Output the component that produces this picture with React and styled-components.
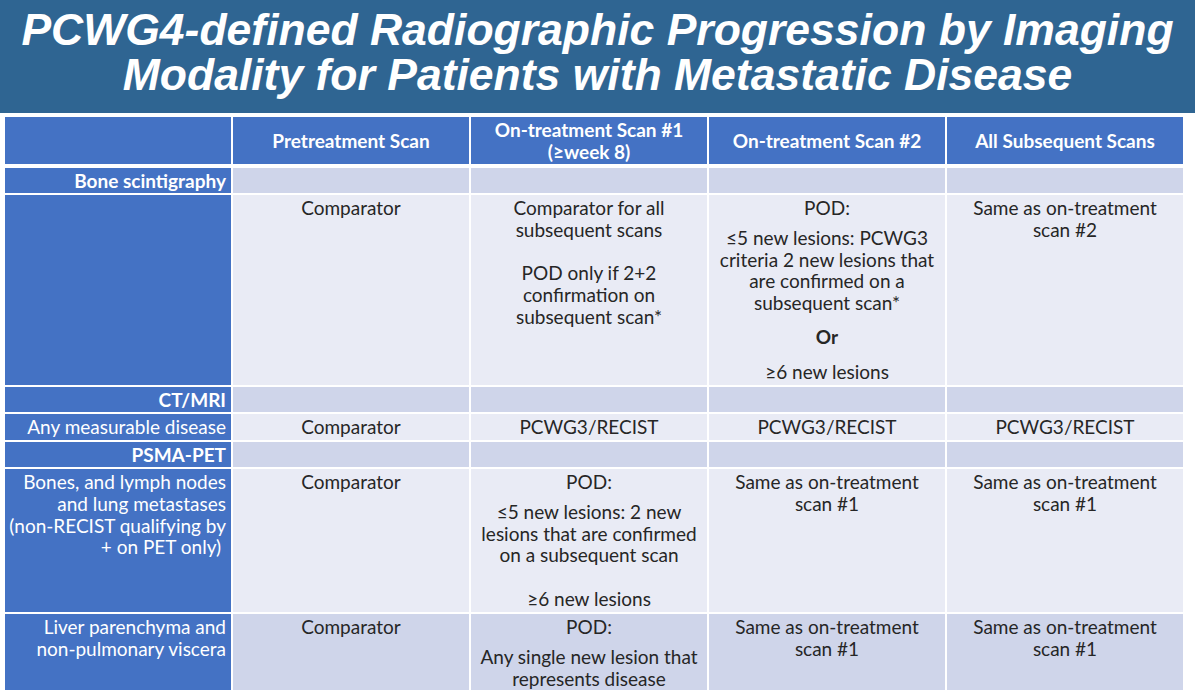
import React from "react";
import styled, { createGlobalStyle } from "styled-components";

const GlobalStyle = createGlobalStyle`
  html, body { margin: 0; padding: 0; background: #ffffff; }
  body { width: 1200px; height: 695px; overflow: hidden; }
`;

const Page = styled.div`
  width: 1200px;
  height: 695px;
  background: #ffffff;
  display: flex;
  flex-direction: column;
`;

const Banner = styled.header`
  width: 1195px;
  height: 113px;
  box-sizing: border-box;
  padding-top: 7px;
  background: #2f6592;
  display: flex;
  flex-direction: column;
  align-items: center;
`;

const Title = styled.h1`
  margin: 0;
  font-family: "Liberation Sans", Arial, sans-serif;
  font-weight: bold;
  font-style: italic;
  font-size: 44.5px;
  line-height: 45px;
  color: #ffffff;
  text-align: center;
  white-space: nowrap;
`;

const Table = styled.div`
  margin: 4px 0 0 5px;
  width: 1178px;
  display: flex;
  flex-direction: column;
  gap: 4px;
  font-family: "Lato", "Open Sans", sans-serif;
`;

const cols = "226px 236px 236px 236px 236px";

const HeaderGrid = styled.div`
  display: grid;
  grid-template-columns: ${cols};
  grid-template-rows: 47px;
  column-gap: 2px;
`;

const BodyGrid = styled.div`
  display: grid;
  grid-template-columns: ${cols};
  grid-template-rows: 25px 190px 25px 26px 25px 143px 76px;
  gap: 2px;
`;

const HeadCell = styled.div`
  background: #4472c4;
  color: #ffffff;
  font-weight: bold;
  font-size: 19px;
  line-height: 22px;
  display: flex;
  align-items: center;
  justify-content: center;
  text-align: center;
  white-space: nowrap;
`;

const RowHead = styled.div`
  background: #4472c4;
  color: #ffffff;
  font-weight: ${(p) => (p.$bold ? "bold" : "normal")};
  font-size: 19px;
  line-height: 21.8px;
  text-align: right;
  white-space: nowrap;
  box-sizing: border-box;
  padding: ${(p) => (p.$center ? "0 5px 0 0" : "2px 5px 0 0")};
  display: flex;
  flex-direction: column;
  justify-content: ${(p) => (p.$center ? "center" : "flex-start")};
`;

const DataCell = styled.div`
  background: ${(p) => (p.$tone === "mid" ? "#cfd5ea" : "#e9ebf5")};
  color: #262626;
  font-size: 19px;
  line-height: 21.8px;
  text-align: center;
  white-space: nowrap;
  box-sizing: border-box;
  padding: ${(p) => (p.$center ? "0" : "2px 0 0 0")};
  display: flex;
  flex-direction: column;
  justify-content: ${(p) => (p.$center ? "center" : "flex-start")};
`;

const Para = styled.p`
  margin: ${(p) => p.$gap || 0}px 0 0 0;
  font-weight: ${(p) => (p.$bold ? "bold" : "normal")};
  min-height: 21.8px;
`;

const Lines = ({ lines }) =>
  lines.map((l, i) => (
    <React.Fragment key={i}>
      {i > 0 && <br />}
      {l}
    </React.Fragment>
  ));

const Cell = ({ paras = [], tone, center }) => (
  <DataCell $tone={tone} $center={center}>
    {paras.map((p, i) => (
      <Para key={i} $gap={p.gap} $bold={p.bold}>
        <Lines lines={p.lines} />
      </Para>
    ))}
  </DataCell>
);

const headers = [
  "",
  ["Pretreatment Scan"],
  ["On-treatment Scan #1", "(≥week 8)"],
  ["On-treatment Scan #2"],
  ["All Subsequent Scans"],
];

const P = (lines, gap = 0, bold = false) => ({ lines, gap, bold });

const sameAs1 = [P(["Same as on-treatment", "scan #1"])];

const rows = [
  { kind: "section", label: "Bone scintigraphy" },
  {
    label: [],
    tone: "light",
    cells: [
      [P(["Comparator"])],
      [P(["Comparator for all", "subsequent scans", "", "POD only if 2+2", "confirmation on", "subsequent scan*"])],
      [
        P(["POD:"]),
        P(["≤5 new lesions: PCWG3", "criteria 2 new lesions that", "are confirmed on a", "subsequent scan*"], 8),
        P(["Or"], 12.5, true),
        P(["≥6 new lesions"], 12.5),
      ],
      [P(["Same as on-treatment", "scan #2"])],
    ],
  },
  { kind: "section", label: "CT/MRI" },
  {
    label: ["Any measurable disease"],
    tone: "light",
    center: true,
    cells: [
      [P(["Comparator"])],
      [P(["PCWG3/RECIST"])],
      [P(["PCWG3/RECIST"])],
      [P(["PCWG3/RECIST"])],
    ],
  },
  { kind: "section", label: "PSMA-PET" },
  {
    label: ["Bones, and lymph nodes", "and lung metastases", "(non-RECIST qualifying by", "+ on PET only)\u00a0"],
    tone: "light",
    cells: [
      [P(["Comparator"])],
      [
        P(["POD:"]),
        P(["≤5 new lesions: 2 new", "lesions that are confirmed", "on a subsequent scan", "", "≥6 new lesions"], 8),
      ],
      sameAs1,
      sameAs1,
    ],
  },
  {
    label: ["Liver parenchyma and", "non-pulmonary viscera"],
    tone: "mid",
    cells: [
      [P(["Comparator"])],
      [P(["POD:"]), P(["Any single new lesion that", "represents disease"], 8)],
      sameAs1,
      sameAs1,
    ],
  },
];

export default function App() {
  return (
    <Page>
      <GlobalStyle />
      <Banner>
        <Title>PCWG4-defined Radiographic Progression by Imaging</Title>
        <Title>Modality for Patients with Metastatic Disease</Title>
      </Banner>
      <Table>
        <HeaderGrid>
          {headers.map((h, i) => (
            <HeadCell key={i}>{h && <span><Lines lines={h} /></span>}</HeadCell>
          ))}
        </HeaderGrid>
        <BodyGrid>
          {rows.map((r, ri) =>
            r.kind === "section" ? (
              <React.Fragment key={ri}>
                <RowHead $bold $center>{r.label}</RowHead>
                {[0, 1, 2, 3].map((c) => (
                  <DataCell key={c} $tone="mid" $center />
                ))}
              </React.Fragment>
            ) : (
              <React.Fragment key={ri}>
                <RowHead $center={r.center}>
                  <span><Lines lines={r.label} /></span>
                </RowHead>
                {r.cells.map((c, ci) => (
                  <Cell key={ci} paras={c} tone={r.tone} center={r.center} />
                ))}
              </React.Fragment>
            )
          )}
        </BodyGrid>
      </Table>
    </Page>
  );
}
